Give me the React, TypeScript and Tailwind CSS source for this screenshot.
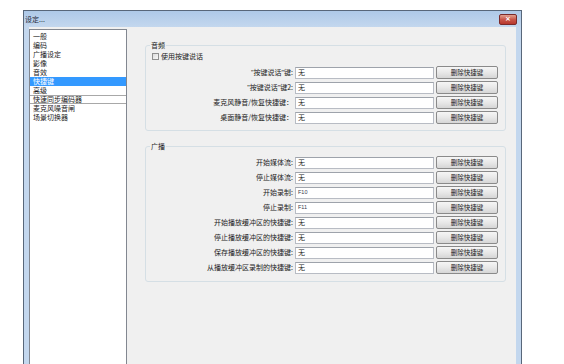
import React from "react";

const font = { fontFamily: '"Noto Sans CJK SC", "Noto Sans", sans-serif' };

const menuItems = ["一般", "编码", "广播设定", "影像", "音效", "快捷键", "高级", "快速同步编码器", "麦克风噪音闸", "场景切换器"];

const audioRows = [
  { label: "按键说话", suffix: "键:", value: "无" },
  { label: "按键说话", suffix: "键2:", value: "无" },
  { label: "麦克风静音/恢复快捷键：", value: "无" },
  { label: "桌面静音/恢复快捷键：", value: "无" },
];

const broadcastRows = [
  { label: "开始媒体流:", value: "无" },
  { label: "停止媒体流:", value: "无" },
  { label: "开始录制:", value: "F10" },
  { label: "停止录制:", value: "F11" },
  { label: "开始播放缓冲区的快捷键:", value: "无" },
  { label: "停止播放缓冲区的快捷键:", value: "无" },
  { label: "保存播放缓冲区的快捷键:", value: "无" },
  { label: "从播放缓冲区录制的快捷键:", value: "无" },
];

const latin = { fontFamily: '"Liberation Sans", sans-serif' };

function HotkeyRow({ label, suffix, value }: { label: string; suffix?: string; value: string }) {
  const isKey = value !== "无";
  return (
    <div className="flex items-center h-[15px]">
      <div className="w-[147px] text-right text-[7px] leading-none text-[#1a1a1a] whitespace-nowrap">
        {suffix ? (
          <>
            <span style={latin}>"</span>
            {label}
            <span style={latin}>"</span>
            {suffix}
          </>
        ) : (
          label
        )}
      </div>
      <div className="ml-[2px] w-[139px] h-[12px] bg-white border border-[#b8bcc4] border-t-[#9ea3ab] flex items-center pl-[2px]">
        {isKey ? (
          <span className="text-[5.5px] leading-none text-[#3a3a4a]" style={latin}>{value}</span>
        ) : (
          <span className="text-[7px] leading-none text-[#1a1a1a]">{value}</span>
        )}
      </div>
      <button className="ml-[2px] w-[62px] h-[13px] rounded-[2px] border border-[#8a8a8a] bg-gradient-to-b from-[#f6f6f6] via-[#e8e8e8] to-[#d6d6d6] text-[6.5px] leading-none text-[#1a1a1a] flex items-center justify-center">
        删除快捷键
      </button>
    </div>
  );
}

export default function App() {
  return (
    <div className="w-[564px] h-[364px] bg-white overflow-hidden pt-[10px] pl-[23px]" style={font}>
      <div className="w-[499px] h-[380px] border border-[#58677a] bg-[#c3d7ee] flex flex-col">
        {/* title bar */}
        <div className="h-[16px] flex items-center justify-between pl-[1px] pr-[4px] bg-gradient-to-b from-[#aec9e8] to-[#c3d7ee]">
          <span className="text-[7px] leading-none text-[#1e2a3a]">设定...</span>
          <div className="w-[18px] h-[11px] rounded-[2px] border border-[#7a2a2a] bg-gradient-to-b from-[#e0a090] via-[#c9564a] to-[#b8372c] flex items-center justify-center">
            <span className="text-[7px] leading-none text-white font-bold" style={{ fontFamily: '"DejaVu Sans", sans-serif' }}>×</span>
          </div>
        </div>

        {/* client */}
        <div className="flex-1 mx-[5px] bg-[#f0f0f0] flex pt-[2px]">
          <div className="w-[98px] bg-white border border-[#828790] pt-[2px] flex flex-col">
            {menuItems.map((item) => (
              <div
                key={item}
                className={
                  item === "快捷键"
                    ? "h-[9px] flex items-center pl-[3px] text-[7px] leading-none bg-[#3399ff] text-white"
                    : item === "快速同步编码器"
                    ? "h-[9px] flex items-center pl-[3px] text-[7px] leading-none text-[#1a1a1a] border-y border-[#a8a8a8]"
                    : "h-[9px] flex items-center pl-[3px] text-[7px] leading-none text-[#1a1a1a]"
                }
              >
                {item}
              </div>
            ))}
          </div>

          <div className="flex-1 pl-[18px] pr-[10px] pt-[12px] flex flex-col">
            <fieldset className="border border-[#d5dfe5] rounded-[3px] pb-[5px]">
              <legend className="ml-[4px] px-[1px] text-[7px] leading-[9px] text-[#1a1a1a]">音频</legend>
              <div className="flex items-center h-[9px] pl-[6px] mt-[2px]">
                <div className="w-[7px] h-[7px] border border-[#8f8f8f] bg-gradient-to-br from-[#dcdcdc] to-[#f8f8f8]" />
                <span className="ml-[2px] text-[7px] leading-none text-[#1a1a1a]">使用按键说话</span>
              </div>
              <div className="mt-[4px] flex flex-col">
                {audioRows.map((r) => (
                  <HotkeyRow key={r.label + (r.suffix ?? "")} label={r.label} suffix={r.suffix} value={r.value} />
                ))}
              </div>
            </fieldset>

            <fieldset className="mt-[11px] border border-[#d5dfe5] rounded-[3px] pb-[6px]">
              <legend className="ml-[4px] px-[1px] text-[7px] leading-[9px] text-[#1a1a1a]">广播</legend>
              <div className="mt-[4px] flex flex-col">
                {broadcastRows.map((r) => (
                  <HotkeyRow key={r.label} label={r.label} value={r.value} />
                ))}
              </div>
            </fieldset>
          </div>
        </div>
      </div>
    </div>
  );
}
